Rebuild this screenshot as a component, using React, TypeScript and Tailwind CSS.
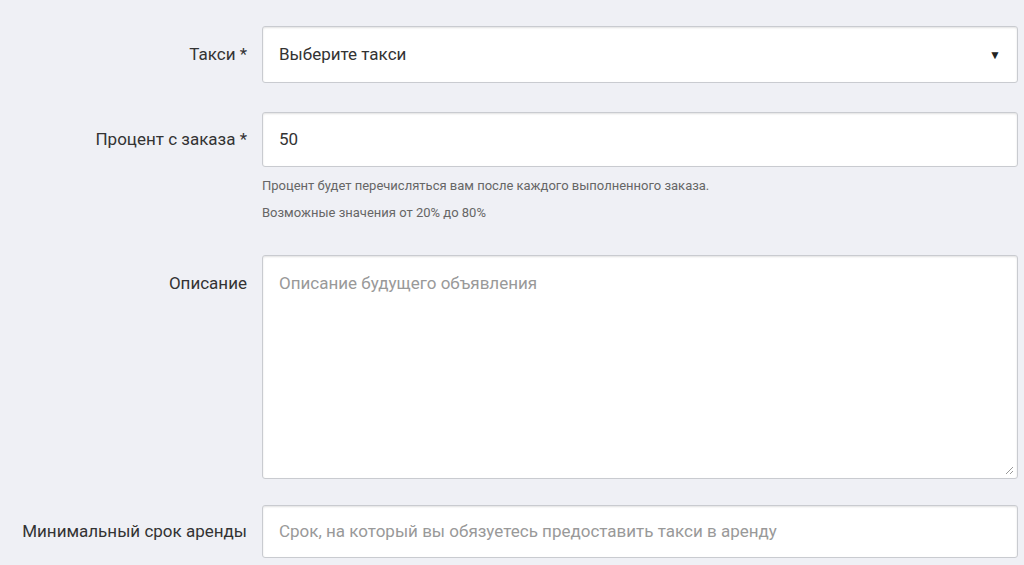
export default function App() {
  const font = { fontFamily: '"Liberation Sans Narrow", "Roboto", sans-serif' };
  const label = "w-[262px] shrink-0 text-right pr-[15px] text-[17px] text-[#333]";
  const box = "flex-1 bg-white border border-[#c9cbd0] rounded-[3px] shadow-[inset_0_1px_2px_rgba(0,0,0,0.12)] px-[16px] text-[17px]";
  return (
    <div className="w-[1024px] h-[565px] bg-[#eff0f5] overflow-hidden pt-[26px] pr-[6px]" style={font}>
      <div className="flex items-center">
        <div className={label}>Такси *</div>
        <div className={box + " h-[57px] flex items-center justify-between text-[#333]"}>
          <span>Выберите такси</span>
          <span className="text-[12px] text-[#222]">▼</span>
        </div>
      </div>
      <div className="flex items-center mt-[29px]">
        <div className={label}>Процент с заказа *</div>
        <div className={box + " h-[55px] flex items-center text-[#333]"}>50</div>
      </div>
      <div className="pl-[262px] mt-[5px] text-[13px] text-[#666] leading-[27px]">
        <div>Процент будет перечисляться вам после каждого выполненного заказа.</div>
        <div>Возможные значения от 20% до 80%</div>
      </div>
      <div className="flex items-start mt-[29px]">
        <div className={label + " pt-[16px]"}>Описание</div>
        <div className={box + " h-[224px] pt-[15px] text-[#999] relative"}>
          Описание будущего объявления
          <svg className="absolute right-[3px] bottom-[3px]" width="10" height="10" viewBox="0 0 10 10">
            <path d="M9 2 L2 9 M9 6 L6 9" stroke="#999" strokeWidth="1" />
          </svg>
        </div>
      </div>
      <div className="flex items-center mt-[26px]">
        <div className="w-[262px] shrink-0 text-right pr-[15px] text-[17px] text-[#333] whitespace-nowrap">Минимальный срок аренды</div>
        <div className={box + " h-[53px] flex items-center text-[#999]"}>Срок, на который вы обязуетесь предоставить такси в аренду</div>
      </div>
    </div>
  );
}
